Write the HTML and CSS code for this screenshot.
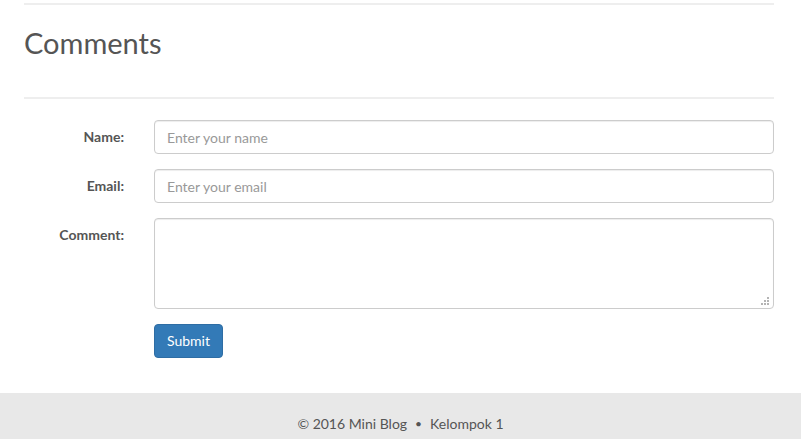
FILE: index.html
```html
<!DOCTYPE html>
<html lang="en">
<head>
<meta charset="utf-8">
<title>Comments</title>
<link rel="stylesheet" href="styles.css">
</head>
<body>
<div class="container">
  <hr class="rule rule-top">
  <h2 class="title">Comments</h2>
  <hr class="rule">
  <form class="form">
    <label class="label" for="name">Name:</label>
    <input class="field" id="name" type="text" placeholder="Enter your name">
    <label class="label" for="email">Email:</label>
    <input class="field" id="email" type="email" placeholder="Enter your email">
    <label class="label label-area" for="comment">Comment:</label>
    <div class="area-wrap">
      <textarea class="field area" id="comment"></textarea>
      <svg class="grip" width="9" height="9" viewBox="0 0 9 9" aria-hidden="true">
        <rect x="6" y="0" width="2" height="2" fill="#b4b4b4"/>
        <rect x="3" y="3" width="2" height="2" fill="#b4b4b4"/>
        <rect x="6" y="3" width="2" height="2" fill="#b4b4b4"/>
        <rect x="0" y="6" width="2" height="2" fill="#b4b4b4"/>
        <rect x="3" y="6" width="2" height="2" fill="#b4b4b4"/>
        <rect x="6" y="6" width="2" height="2" fill="#b4b4b4"/>
      </svg>
    </div>
    <span></span>
    <div><button class="btn" type="button">Submit</button></div>
  </form>
</div>
<footer class="footer">
  <span>© 2016 Mini Blog</span><span class="dot">•</span><span>Kelompok 1</span>
</footer>
</body>
</html>
```

FILE: styles.css
```css
* { box-sizing: border-box; }
html, body { margin: 0; padding: 0; }
body {
  font-family: Lato, "Open Sans", sans-serif;
  font-size: 14px;
  color: #555;
  background: #fff;
}
.container {
  width: 750px;
  margin-left: 24px;
  padding-top: 3px;
}
.rule {
  border: 0;
  border-top: 2px solid #eeeeee;
  margin: 0;
}
.title {
  font-weight: 400;
  font-size: 29px;
  line-height: 33px;
  margin: 21px 0 38px 0;
  color: #555;
}
.form {
  display: grid;
  grid-template-columns: 100px 1fr;
  column-gap: 30px;
  row-gap: 15px;
  margin-top: 21px;
  padding-bottom: 35px;
}
.label {
  text-align: right;
  font-weight: 700;
  font-size: 14px;
  line-height: 20px;
  padding-top: 7px;
  color: #555;
}
.field {
  display: block;
  width: 100%;
  height: 34px;
  padding: 6px 12px;
  font-family: inherit;
  font-size: 14px;
  color: #555;
  border: 1px solid #ccc;
  border-radius: 4px;
  box-shadow: inset 0 1px 1px rgba(0,0,0,.075);
  background: #fff;
  margin: 0;
}
.field::placeholder { color: #999; }
.area-wrap { position: relative; }
.area { height: 91px; resize: none; }
.grip {
  position: absolute;
  right: 4px;
  bottom: 3px;
  display: block;
}
.btn {
  font-family: inherit;
  font-size: 14px;
  line-height: 20px;
  height: 34px;
  padding: 6px 12px;
  color: #fff;
  background: #337ab7;
  border: 1px solid #2e6da4;
  border-radius: 4px;
}
.footer {
  background: #e8e8e8;
  height: 46px;
  display: flex;
  justify-content: center;
  align-items: center;
  padding-top: 14px;
  font-size: 14px;
  color: #555;
}
.dot { margin: 0 8px; font-size: 12px; }
```
